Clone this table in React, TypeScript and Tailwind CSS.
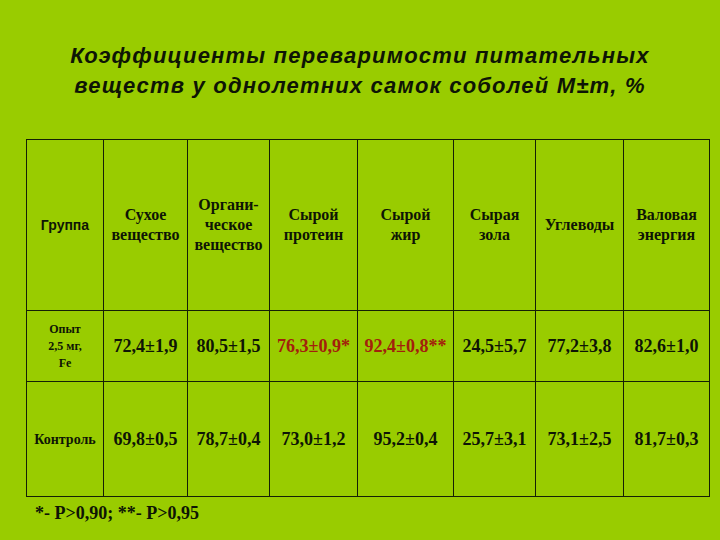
const serif = { fontFamily: '"Liberation Serif", "Times New Roman", serif' }

const headers = [
  { label: ['Группа'], sans: true },
  { label: ['Сухое', 'вещество'] },
  { label: ['Органи-', 'ческое', 'вещество'] },
  { label: ['Сырой', 'протеин'] },
  { label: ['Сырой', 'жир'] },
  { label: ['Сырая', 'зола'] },
  { label: ['Углеводы'] },
  { label: ['Валовая', 'энергия'] },
]

const widths = ['w-[77px]', 'w-[84px]', 'w-[82px]', 'w-[88px]', 'w-[96px]', 'w-[82px]', 'w-[88px]', 'w-[86px]']

const rows = [
  {
    group: ['Опыт', '2,5 мг,', 'Fe'],
    h: 'h-[71px]',
    values: ['72,4±1,9', '80,5±1,5', '76,3±0,9*', '92,4±0,8**', '24,5±5,7', '77,2±3,8', '82,6±1,0'],
    red: [2, 3],
  },
  {
    group: ['Контроль'],
    h: 'h-[115px]',
    values: ['69,8±0,5', '78,7±0,4', '73,0±1,2', '95,2±0,4', '25,7±3,1', '73,1±2,5', '81,7±0,3'],
    red: [] as number[],
  },
]

export default function App() {
  return (
    <div className="w-[720px] h-[540px] bg-[#99cc00] text-[#0e1505] overflow-hidden">
      <h1
        className="pt-[41px] text-center text-[22px] leading-[30px] font-bold italic tracking-[1.2px]"
        style={{ fontFamily: '"Liberation Sans", Arial, sans-serif' }}
      >
        Коэффициенты переваримости питательных
        <br />
        веществ у однолетних самок соболей M±m, %
      </h1>

      <table className="ml-[26px] mt-[38px] border-collapse table-fixed" style={serif}>
        <thead>
          <tr className="h-[171px]">
            {headers.map((h, i) => (
              <th
                key={i}
                className={`${widths[i]} border border-[#152005] p-0 text-center align-middle font-bold ${
                  h.sans ? 'text-[14px]' : 'text-[16px] leading-[20px]'
                }`}
                style={h.sans ? { fontFamily: '"Liberation Sans", Arial, sans-serif' } : undefined}
              >
                {h.label.map((l, j) => (
                  <div key={j}>{l}</div>
                ))}
              </th>
            ))}
          </tr>
        </thead>
        <tbody>
          {rows.map((r, i) => (
            <tr key={i} className={r.h}>
              <td className="border border-[#152005] p-0 text-center align-middle font-bold text-[12px] leading-[17px]">
                {r.group.map((g, j) => (
                  <div key={j} className={r.group.length === 1 ? 'text-[14px]' : ''}>
                    {g}
                  </div>
                ))}
              </td>
              {r.values.map((v, j) => (
                <td
                  key={j}
                  className={`border border-[#152005] p-0 text-center align-middle font-bold text-[18px] whitespace-nowrap ${
                    r.red.includes(j) ? 'text-[#a3200c]' : ''
                  }`}
                >
                  {v}
                </td>
              ))}
            </tr>
          ))}
        </tbody>
      </table>

      <p className="ml-[35px] mt-[3px] text-[18px] font-bold" style={serif}>
        *- P&gt;0,90; **- P&gt;0,95
      </p>
    </div>
  )
}
